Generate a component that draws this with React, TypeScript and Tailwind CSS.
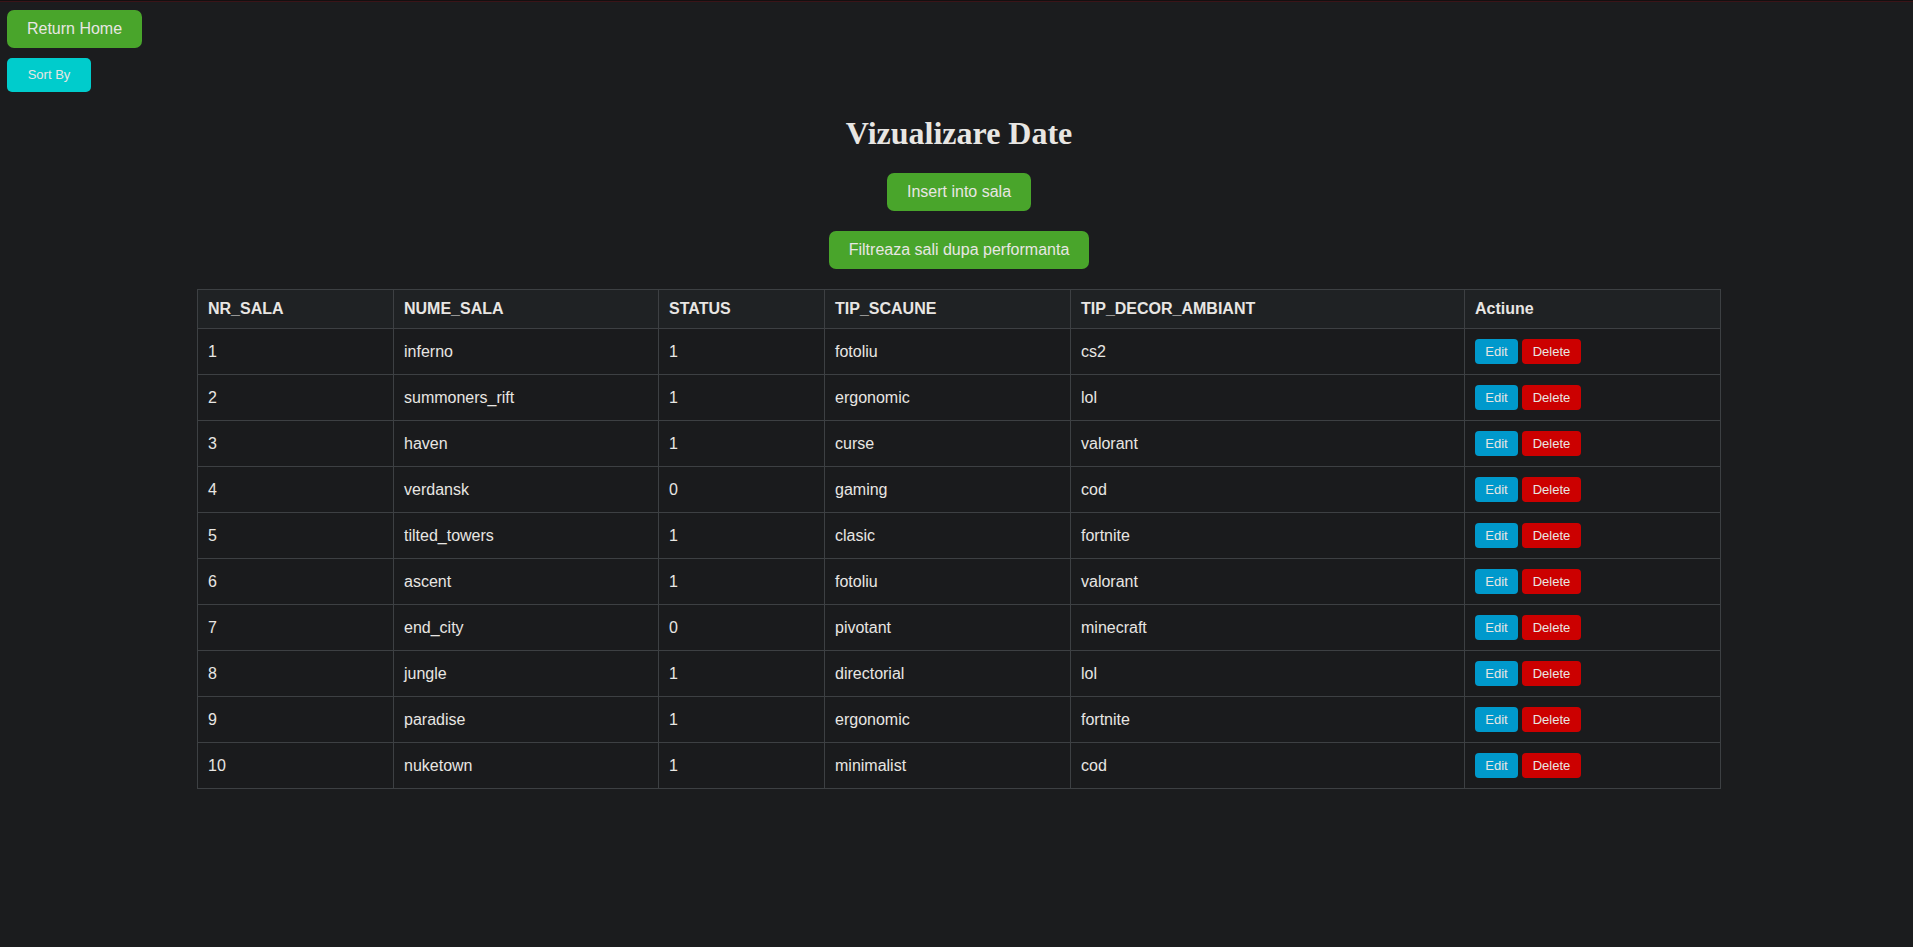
import React from "react";

type Sala = {
  nr: number;
  nume: string;
  status: number;
  scaune: string;
  decor: string;
};

const sali: Sala[] = [
  { nr: 1, nume: "inferno", status: 1, scaune: "fotoliu", decor: "cs2" },
  { nr: 2, nume: "summoners_rift", status: 1, scaune: "ergonomic", decor: "lol" },
  { nr: 3, nume: "haven", status: 1, scaune: "curse", decor: "valorant" },
  { nr: 4, nume: "verdansk", status: 0, scaune: "gaming", decor: "cod" },
  { nr: 5, nume: "tilted_towers", status: 1, scaune: "clasic", decor: "fortnite" },
  { nr: 6, nume: "ascent", status: 1, scaune: "fotoliu", decor: "valorant" },
  { nr: 7, nume: "end_city", status: 0, scaune: "pivotant", decor: "minecraft" },
  { nr: 8, nume: "jungle", status: 1, scaune: "directorial", decor: "lol" },
  { nr: 9, nume: "paradise", status: 1, scaune: "ergonomic", decor: "fortnite" },
  { nr: 10, nume: "nuketown", status: 1, scaune: "minimalist", decor: "cod" },
];

const th = "border border-[#3d4043] px-[10px] py-[10px] text-left font-bold leading-[18px]";
const td = "border border-[#3d4043] px-[10px] py-[10px] leading-[18px]";

export default function App() {
  return (
    <div className="min-h-[947px] bg-[#1b1c1e] text-[#e8e6e3] font-['Liberation_Sans',Arial,sans-serif]">
      <div className="h-[2px] bg-[#140f10] border-b border-[#3a1418]" />

      <div className="pl-[7px]">
        <button className="mt-[8px] block h-[38px] w-[135px] rounded-[7px] bg-[#49a52b] text-[16px] text-[#e8e6e3]">
          Return Home
        </button>
        <button className="mt-[10px] block h-[34px] w-[84px] rounded-[5px] bg-[#00cccc] text-[13px] text-[#e8e6e3]">
          Sort By
        </button>
      </div>

      <div className="flex flex-col items-center pl-[5px]">
        <h1 className="mt-[23px] font-['Liberation_Serif','Times_New_Roman',serif] text-[32px] font-bold leading-[36px]">
          Vizualizare Date
        </h1>
        <button className="mt-[22px] h-[38px] w-[144px] rounded-[7px] bg-[#49a52b] text-[16px] text-[#e8e6e3]">
          Insert into sala
        </button>
        <button className="mt-[20px] h-[38px] w-[260px] rounded-[7px] bg-[#49a52b] text-[16px] text-[#e8e6e3]">
          Filtreaza sali dupa performanta
        </button>

        <table className="mt-[20px] w-[1523px] table-fixed border-collapse text-[16px]">
          <thead>
            <tr className="bg-[#1f2224]">
              <th className={`${th} w-[196px]`}>NR_SALA</th>
              <th className={`${th} w-[265px]`}>NUME_SALA</th>
              <th className={`${th} w-[166px]`}>STATUS</th>
              <th className={`${th} w-[246px]`}>TIP_SCAUNE</th>
              <th className={`${th} w-[394px]`}>TIP_DECOR_AMBIANT</th>
              <th className={`${th} w-[256px]`}>Actiune</th>
            </tr>
          </thead>
          <tbody>
            {sali.map((s) => (
              <tr key={s.nr} className="bg-[#1a1b1d]">
                <td className={td}>{s.nr}</td>
                <td className={td}>{s.nume}</td>
                <td className={td}>{s.status}</td>
                <td className={td}>{s.scaune}</td>
                <td className={td}>{s.decor}</td>
                <td className={td}>
                  <div className="flex gap-[4px]">
                    <button className="h-[25px] w-[43px] rounded-[4px] bg-[#0099cc] text-[13px] leading-[15px] text-[#e8e6e3]">
                      Edit
                    </button>
                    <button className="h-[25px] w-[59px] rounded-[4px] bg-[#cc0000] text-[13px] leading-[15px] text-[#e8e6e3]">
                      Delete
                    </button>
                  </div>
                </td>
              </tr>
            ))}
          </tbody>
        </table>
      </div>
    </div>
  );
}
